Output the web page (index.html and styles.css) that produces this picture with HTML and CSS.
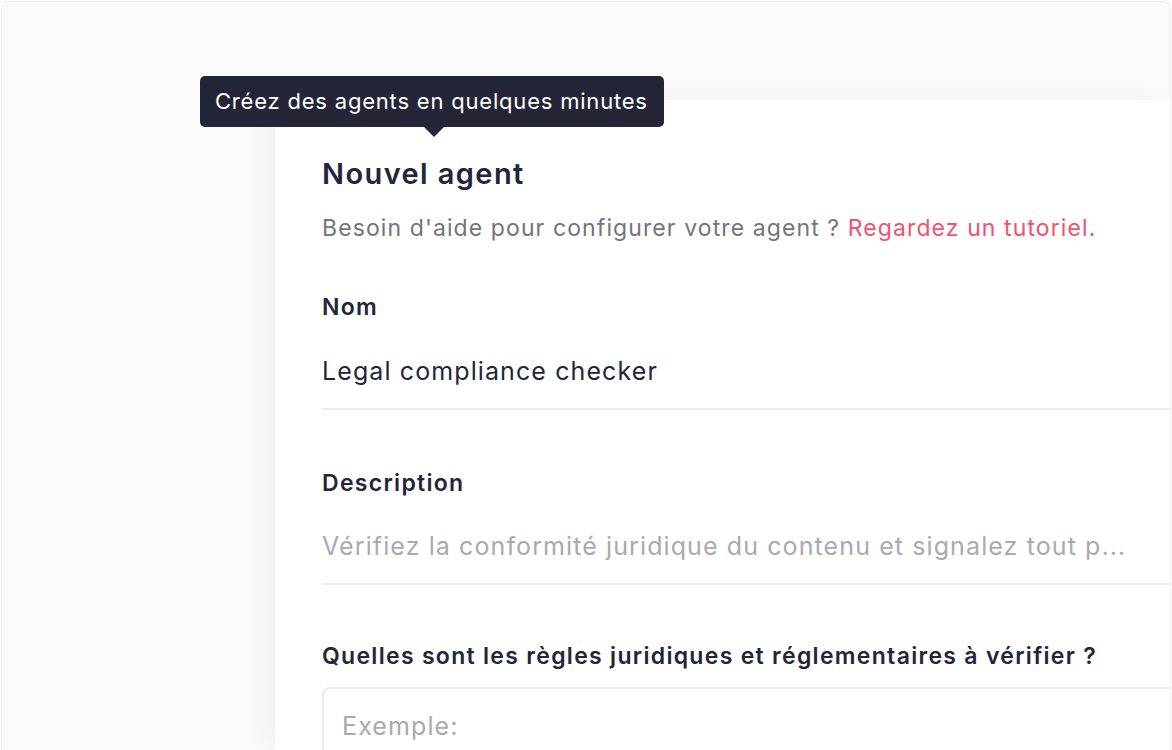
FILE: index.html
```html
<!DOCTYPE html>
<html lang="fr">
<head>
<meta charset="utf-8">
<title>Nouvel agent</title>
<link rel="stylesheet" href="styles.css">
</head>
<body>
<div class="frame">
  <div class="tooltip">Créez des agents en quelques minutes</div>
  <div class="card">
    <h1 class="title">Nouvel agent</h1>
    <p class="subtitle">Besoin d'aide pour configurer votre agent ? <a class="link" href="#">Regardez un tutoriel.</a></p>

    <div class="field">
      <div class="label">Nom</div>
      <div class="input">Legal compliance checker</div>
    </div>

    <div class="field">
      <div class="label">Description</div>
      <div class="input input-desc placeholder">Vérifiez la conformité juridique du contenu et signalez tout p...</div>
    </div>

    <div class="field field-rules">
      <div class="label">Quelles sont les règles juridiques et réglementaires à vérifier ?</div>
      <div class="textarea"><span class="placeholder">Exemple:</span></div>
    </div>
  </div>
</div>
</body>
</html>
```

FILE: styles.css
```css
* { box-sizing: border-box; }
html, body {
  margin: 0;
  padding: 0;
  height: 100%;
  overflow: hidden;
  background: #ffffff;
  font-family: Inter, "Noto Sans", sans-serif;
  color: #23253a;
}
.frame {
  position: relative;
  margin: 1px 1px 0 1px;
  height: 749px;
  overflow: hidden;
  background: #fafafa;
  border: 1px solid #efefef;
  border-bottom: none;
  border-radius: 8px 8px 0 0;
  padding: 98px 0 0 273px;
}
.tooltip {
  position: absolute;
  left: 198px;
  top: 74px;
  height: 51px;
  width: 464px;
  background: #242638;
  color: #ffffff;
  border-radius: 5px;
  font-size: 22px;
  line-height: 51px;
  letter-spacing: 0.8px;
  padding: 0 15px;
  z-index: 2;
  white-space: nowrap;
}
.tooltip::after {
  content: "";
  position: absolute;
  left: 223px;
  top: 50px;
  border-left: 11px solid transparent;
  border-right: 11px solid transparent;
  border-top: 11px solid #242638;
}
.card {
  background: #ffffff;
  height: 100%;
  padding: 56px 0 0 47px;
  box-shadow: -10px 0 22px rgba(0, 0, 0, 0.035);
}
.title {
  margin: 0;
  font-size: 29px;
  line-height: 36px;
  font-weight: 600;
  letter-spacing: 1.4px;
  color: #23253a;
}
.subtitle {
  margin: 21px 0 0 0;
  font-size: 23px;
  line-height: 30px;
  letter-spacing: 1.1px;
  color: #73737e;
  white-space: nowrap;
}
.link {
  color: #f5506e;
  text-decoration: none;
}
.field { margin-top: 49px; }
.field + .field { margin-top: 58px; }
.field-rules.field { margin-top: 56px; }
.label {
  font-size: 23px;
  line-height: 30px;
  font-weight: 600;
  letter-spacing: 1.3px;
  color: #23253a;
  white-space: nowrap;
}
.input {
  margin-top: 32px;
  font-size: 25px;
  line-height: 34px;
  letter-spacing: 1.1px;
  padding-bottom: 20px;
  border-bottom: 2px solid #ebebec;
  color: #23253a;
  white-space: nowrap;
}
.input-desc { margin-top: 31px; }
.placeholder { color: #a9a9b2; }
.textarea {
  margin-top: 16px;
  border: 2px solid #ebebec;
  border-right: none;
  border-radius: 8px 0 0 8px;
  padding: 20px 18px;
  font-size: 25px;
  line-height: 34px;
  letter-spacing: 1.1px;
  height: 120px;
}
```
